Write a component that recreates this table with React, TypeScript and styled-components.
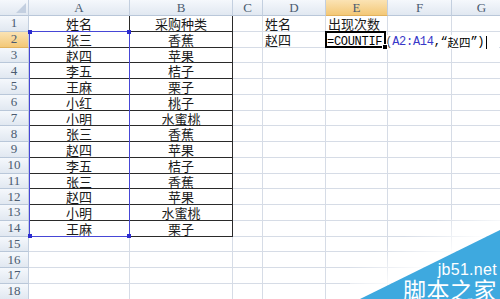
import React from 'react'
import styled, { createGlobalStyle } from 'styled-components'

const GlobalStyle = createGlobalStyle`
  html, body {
    margin: 0;
    padding: 0;
    background: #fff;
  }
  body {
    width: 500px;
    height: 299px;
    overflow: hidden;
  }
`

const COL_WIDTHS = [29, 101, 103, 30, 63, 62, 64, 60]
const COL_NAMES = ['A', 'B', 'C', 'D', 'E', 'F', 'G']
const ROW_COUNT = 18
const ACTIVE_COL = 'E'
const ACTIVE_ROW = 2

const NAMES = ['姓名', '张三', '赵四', '李五', '王麻', '小红', '小明', '张三', '赵四', '李五', '张三', '赵四', '小明', '王麻']
const KINDS = ['采购种类', '香蕉', '苹果', '桔子', '栗子', '桃子', '水蜜桃', '香蕉', '苹果', '桔子', '香蕉', '苹果', '水蜜桃', '栗子']

const Sheet = styled.div`
  background: #fff;
  display: grid;
  font-family: 'Noto Sans CJK SC', sans-serif;
  grid-template-columns: ${COL_WIDTHS.map((w) => `${w}px`).join(' ')};
  grid-template-rows: 16px repeat(${ROW_COUNT}, 15.75px);
  height: 299px;
  overflow: hidden;
  position: relative;
  width: 500px;
`

type Placed = { $row: number; $col: number }

const HeaderCell = styled.div<Placed & { $active?: boolean }>`
  align-items: center;
  background: ${({ $active }) =>
    $active ? 'linear-gradient(#fbe3b4, #f3c877)' : 'linear-gradient(#f5f8fc, #e1e8f1)'};
  border-bottom: 1px solid ${({ $active }) => ($active ? '#e1b25e' : '#b9c7d9')};
  border-right: 1px solid #c3cfdf;
  box-sizing: border-box;
  color: #4b5b70;
  display: flex;
  font-family: 'Liberation Serif', 'DejaVu Serif', serif;
  font-size: 13px;
  grid-column: ${({ $col }) => $col};
  grid-row: ${({ $row }) => $row};
  justify-content: center;
  overflow: hidden;
`

const Corner = styled(HeaderCell)`
  position: relative;

  &::after {
    border-bottom: 10px solid #c3cfe0;
    border-left: 10px solid transparent;
    bottom: 2px;
    content: '';
    position: absolute;
    right: 2px;
  }
`

const Cell = styled.div<Placed & { $table?: boolean; $align?: 'left' | 'center' }>`
  border-bottom: 1px solid ${({ $table }) => ($table ? '#2a2a2a' : '#d6dce6')};
  border-right: 1px solid ${({ $table }) => ($table ? '#2a2a2a' : '#d6dce6')};
  box-sizing: border-box;
  color: #1a1a1a;
  font-size: 13px;
  grid-column: ${({ $col }) => $col};
  grid-row: ${({ $row }) => $row};
  line-height: 15px;
  padding: 0 2px;
  text-align: ${({ $align }) => $align ?? 'left'};
  white-space: nowrap;
`

const RangeBox = styled.div`
  border: 1px solid #4646d6;
  grid-column: 2;
  grid-row: 3 / 16;
  margin-top: -1px;
  pointer-events: none;
  position: relative;
  z-index: 2;
`

const Handle = styled.span<{ $x: 'left' | 'right'; $y: 'top' | 'bottom' }>`
  background: #2b2bd0;
  height: 4px;
  position: absolute;
  width: 4px;
  ${({ $x }) => `${$x}: -2px;`}
  ${({ $y }) => `${$y}: -2px;`}
`

const Selection = styled.div`
  border: 2px solid #000;
  grid-column: 6;
  grid-row: 3;
  margin: -1px 2px 0 -1px;
  pointer-events: none;
  position: relative;
  z-index: 4;
`

const FillHandle = styled.span`
  background: #000;
  border: 1px solid #fff;
  bottom: -4px;
  height: 4px;
  position: absolute;
  right: -4px;
  width: 4px;
`

const Formula = styled.span`
  align-items: center;
  background: #fff;
  color: #000;
  display: inline-flex;
  font-family: 'Liberation Mono', monospace;
  font-size: 12px;
  height: 14px;
  letter-spacing: -0.3px;
  margin-left: -1px;
  padding-right: 12px;
  position: relative;
  z-index: 3;
`

const Ref = styled.span`
  color: #3838c8;
`

const Han = styled.span`
  font-family: 'Noto Sans CJK SC', sans-serif;
  font-size: 11.5px;
  letter-spacing: 0;
`

const Paren = styled.span`
  color: #555;
  display: inline-block;
  text-align: right;
  width: 10px;
`

const Caret = styled.span`
  background: #000;
  display: inline-block;
  height: 13px;
  margin-left: 2px;
  width: 1px;
`

const Watermark = styled.div`
  bottom: 0;
  height: 80px;
  pointer-events: none;
  position: absolute;
  right: 0;
  width: 150px;
  z-index: 5;

  svg {
    display: block;
  }
`

const MarkText = styled.div`
  align-items: flex-end;
  bottom: -2px;
  color: #fff;
  display: flex;
  flex-direction: column;
  position: absolute;
  right: 3px;
`

const Site = styled.span`
  font-family: 'Liberation Sans', sans-serif;
  font-size: 16px;
  letter-spacing: 0.3px;
  line-height: 15px;
`

const Brand = styled.span`
  font-family: 'Noto Sans CJK SC', sans-serif;
  font-size: 23px;
  letter-spacing: 0.5px;
  line-height: 24px;
`

export default function App() {
  const rows = Array.from({ length: ROW_COUNT }, (_, i) => i + 1)

  return (
    <>
      <GlobalStyle />
      <Sheet>
        <Corner $row={1} $col={1} />
        {COL_NAMES.map((name, i) => (
          <HeaderCell key={name} $row={1} $col={i + 2} $active={name === ACTIVE_COL}>
            {name}
          </HeaderCell>
        ))}
        {rows.map((r) => (
          <HeaderCell key={`h${r}`} $row={r + 1} $col={1} $active={r === ACTIVE_ROW}>
            {r}
          </HeaderCell>
        ))}

        {rows.map((r) =>
          COL_NAMES.map((name, i) => {
            const col = i + 2
            const inTable = r <= 14 && (name === 'A' || name === 'B')
            let content: React.ReactNode = null
            if (inTable) content = name === 'A' ? NAMES[r - 1] : KINDS[r - 1]
            if (name === 'D' && r === 1) content = '姓名'
            if (name === 'D' && r === 2) content = '赵四'
            if (name === 'E' && r === 1) content = '出现次数'
            if (name === 'E' && r === 2)
              content = (
                <Formula>
                  =COUNTIF<Paren>(</Paren>
                  <Ref>A2:A14</Ref>,“<Han>赵四</Han>”)
                  <Caret />
                </Formula>
              )
            return (
              <Cell key={`${name}${r}`} $row={r + 1} $col={col} $table={inTable} $align={inTable ? 'center' : 'left'}>
                {content}
              </Cell>
            )
          }),
        )}

        <RangeBox>
          <Handle $x="left" $y="top" />
          <Handle $x="right" $y="top" />
          <Handle $x="left" $y="bottom" />
          <Handle $x="right" $y="bottom" />
        </RangeBox>

        <Selection>
          <FillHandle />
        </Selection>

        <Watermark>
          <svg width="150" height="80" viewBox="0 0 150 80">
            <defs>
              <linearGradient id="fade" gradientUnits="userSpaceOnUse" x1="62" y1="12" x2="80" y2="45.5">
                <stop offset="0" stopColor="#fff" stopOpacity="0" />
                <stop offset="1" stopColor="#fff" stopOpacity="0.95" />
              </linearGradient>
            </defs>
            <polygon points="-70,80 150,-30 150,11 10,80" fill="url(#fade)" />
            <polygon points="10,80 150,11 150,80" fill="#3ea9df" />
          </svg>
          <MarkText>
            <Site>jb51.net</Site>
            <Brand>脚本之家</Brand>
          </MarkText>
        </Watermark>
      </Sheet>
    </>
  )
}
